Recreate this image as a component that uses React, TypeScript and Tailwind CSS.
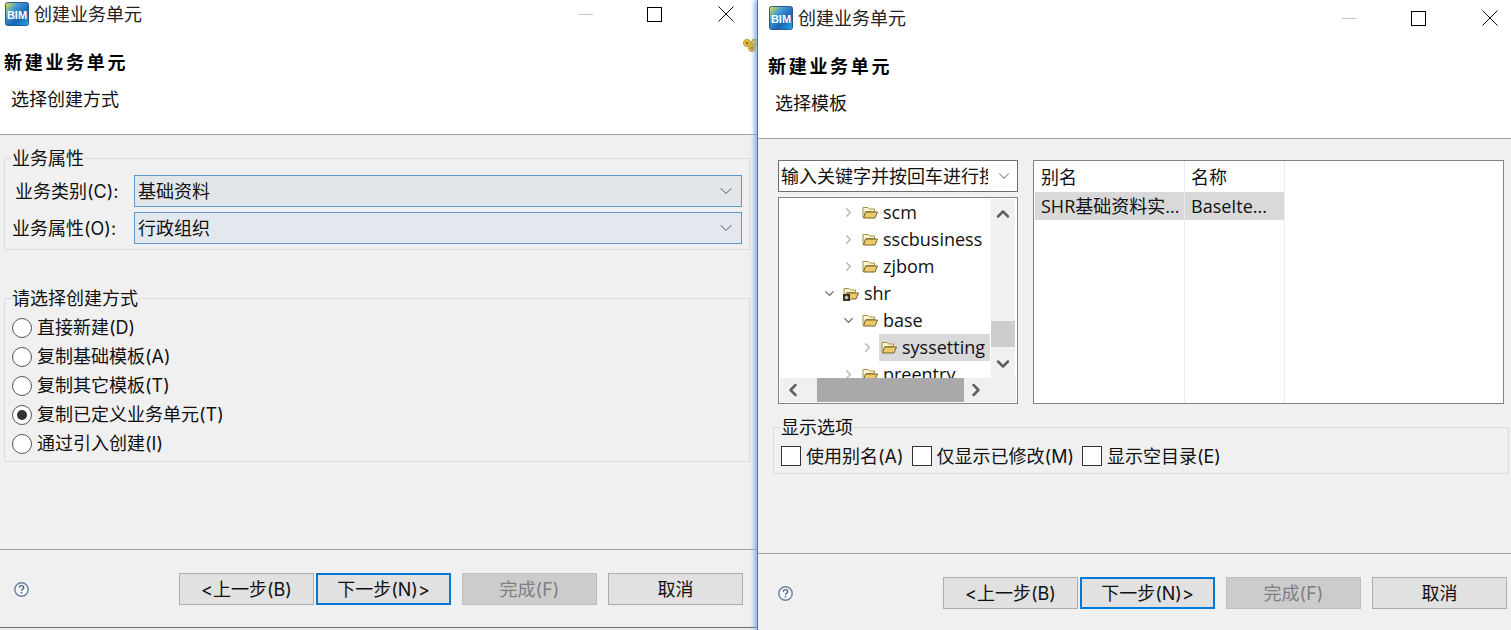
import type { ReactNode } from 'react';
import { ChevronDown, ChevronRight, ChevronUp, ChevronLeft } from 'lucide-react';

const font = "font-['Open_Sans','Noto_Sans_CJK_SC',sans-serif]";
// labels with mnemonics run a bit wider in the original, Inter gets closer
const labelFont = "font-['Inter','Noto_Sans_CJK_SC',sans-serif]";

function BimIcon() {
  return (
    <svg width="24" height="24" viewBox="0 0 24 24" className="shrink-0">
      <defs>
        <linearGradient id="bimBg" x1="0" y1="0" x2="1" y2="1">
          <stop offset="0" stopColor="#f4e62e" />
          <stop offset="0.32" stopColor="#3f9ad8" />
          <stop offset="0.65" stopColor="#1a62b2" />
          <stop offset="1" stopColor="#12b4ea" />
        </linearGradient>
      </defs>
      <rect x="0.5" y="0.5" width="23" height="23" rx="2" fill="url(#bimBg)" stroke="#2a5a92" />
      <text x="12" y="16.5" textAnchor="middle" fontSize="11" fontWeight="700" fontFamily="Liberation Sans, sans-serif" fill="#fff">BIM</text>
    </svg>
  );
}

function WindowControls() {
  return (
    <div className="ml-auto flex items-center">
      <div className="h-px w-[15px] bg-[#c8c8c8]" />
      <div className="ml-[54px] h-[15px] w-[15px] border border-black" />
      <svg width="16" height="16" viewBox="0 0 16 16" className="ml-[56px] mr-[23px]">
        <path d="M0.5 0.5L15.5 15.5M15.5 0.5L0.5 15.5" stroke="#111" strokeWidth="1" />
      </svg>
    </div>
  );
}

function HelpIcon() {
  return (
    <svg width="15" height="15" viewBox="0 0 15 15">
      <circle cx="7.5" cy="7.5" r="6.7" fill="#f4f6fa" stroke="#6f84a6" strokeWidth="1.5" />
      <path d="M5.3 5.8c0-1.4 1-2.1 2.2-2.1s2.2.7 2.2 2c0 1.6-2.2 1.6-2.2 3.2" fill="none" stroke="#4a5f82" strokeWidth="1.3" />
      <rect x="6.8" y="10" width="1.4" height="1.4" fill="#4a5f82" />
    </svg>
  );
}

function Btn({ label, kind = 'normal' }: { label: string; kind?: 'normal' | 'primary' | 'disabled' }) {
  const cls =
    kind === 'primary'
      ? 'border-2 border-[#0078d7] bg-[#e1e1e1] text-[#111]'
      : kind === 'disabled'
      ? 'border border-[#bfbfbf] bg-[#cccccc] text-[#7f7f7f]'
      : 'border border-[#adadad] bg-[#e1e1e1] text-[#111]';
  return <div className={`flex h-[32px] w-[135px] items-center justify-center text-[18px] ${labelFont} ${cls}`}>{label}</div>;
}

function Dialog({ subtitle, section, lift, children }: { subtitle: string; section: string; lift: string; children: ReactNode }) {
  return (
    <>
      <div className={`${section} ${lift} shrink-0 bg-white`}>
        <div className="flex h-[28px] items-center pl-[5px]">
          <BimIcon />
          <span className="ml-[5px] text-[18px] leading-[28px] text-[#222]">创建业务单元</span>
          <WindowControls />
        </div>
        <div className="ml-[4px] mt-[22px] text-[18px] font-bold leading-[24px] tracking-[2.7px] text-black">新建业务单元</div>
        <div className="ml-[11px] mt-[13px] pb-[23px] text-[18px] leading-[24px] text-[#111]">{subtitle}</div>
      </div>
      <div className="h-px w-full bg-[#a0a0a0]" />
      <div className={`${section} h-[414px] shrink-0 bg-[#f0f0f0]`}>{children}</div>
      <div className="h-px w-full bg-[#a0a0a0]" />
      <div className={`${section} flex h-[77px] shrink-0 items-start bg-[#f0f0f0] pt-[23px]`}>
        <div className="ml-[14px] mt-[9px] flex">
          <HelpIcon />
        </div>
        <div className="ml-[150px] flex">
          <Btn label="<上一步(B)" />
          <div className="ml-[2px]">
            <Btn label="下一步(N)>" kind="primary" />
          </div>
          <div className="ml-[11px]">
            <Btn label="完成(F)" kind="disabled" />
          </div>
          <div className="ml-[11px]">
            <Btn label="取消" />
          </div>
        </div>
      </div>
    </>
  );
}

function Combo({ label, labelClass, value, bg }: { label: string; labelClass: string; value: string; bg: string }) {
  return (
    <div className="flex h-[32px] items-center">
      <span className={`text-[18px] text-[#111] ${labelFont} ${labelClass}`}>{label}</span>
      <div className={`ml-auto flex h-[32px] w-[608px] items-center border border-[#5f96c8] pl-[3px] pr-[5px] text-[18px] text-[#111] ${bg}`}>
        {value}
        <ChevronDown className="ml-auto text-[#555]" size={20} strokeWidth={1.2} />
      </div>
    </div>
  );
}

function Radio({ label, checked = false }: { label: string; checked?: boolean }) {
  return (
    <div className="flex h-[29px] items-center pl-[7px]">
      <div className="flex h-[20px] w-[20px] items-center justify-center rounded-full border border-[#555] bg-white">
        {checked && <div className="h-[10px] w-[10px] rounded-full bg-[#333]" />}
      </div>
      <span className={`ml-[5px] text-[18px] text-[#111] ${labelFont}`}>{label}</span>
    </div>
  );
}

function Check({ label, gap }: { label: string; gap: string }) {
  return (
    <div className={`flex h-[20px] items-center ${gap}`}>
      <div className="h-[20px] w-[20px] border border-[#333] bg-white" />
      <span className={`ml-[5px] text-[18px] text-[#111] ${labelFont}`}>{label}</span>
    </div>
  );
}

function Folder({ pkg = false }: { pkg?: boolean }) {
  return (
    <svg width="17" height="15" viewBox="0 0 17 15" className="shrink-0">
      <path d="M1 12V2.5H6L7.5 4H12.5V6.5H4L2 12Z" fill="#fff6cf" stroke="#a58e46" />
      <path d="M3.5 7H15.5L13 13H1.5Z" fill="#ecc969" stroke="#75652f" />
      {pkg && <rect x="0" y="8" width="7" height="7" fill="#3a2f1a" />}
      {pkg && <path d="M2 10l3 3M5 10l-3 3M3.5 9.5v4M1.5 11.5h4" stroke="#fff" strokeWidth="0.6" />}
    </svg>
  );
}

function TreeRow({ indent, label, open = false, pkg = false, selected = false }: { indent: string; label: string; open?: boolean; pkg?: boolean; selected?: boolean }) {
  const Arrow = open ? ChevronDown : ChevronRight;
  return (
    <div className={`flex h-[27px] shrink-0 items-center ${indent}`}>
      <Arrow size={15} strokeWidth={2} className={open ? 'text-[#666]' : 'text-[#b4b4b4]'} />
      <div className={`ml-[4px] flex h-[27px] items-center whitespace-nowrap pl-[2px] text-[18px] text-[#111] ${selected ? 'bg-[#d9d9d9] pr-[5px]' : 'pr-[2px]'}`}>
        <Folder pkg={pkg} />
        <span className="ml-[4px]">{label}</span>
      </div>
    </div>
  );
}

function TreePanel() {
  return (
    <div className="mt-[5px] flex h-[207px] w-[240px] flex-col border border-[#82828c] bg-white p-px">
      <div className="flex h-[179px] shrink-0">
        <div className="flex min-w-0 flex-1 flex-col overflow-hidden">
          <TreeRow indent="ml-[61px]" label="scm" />
          <TreeRow indent="ml-[61px]" label="sscbusiness" />
          <TreeRow indent="ml-[61px]" label="zjbom" />
          <TreeRow indent="ml-[42px]" label="shr" open pkg />
          <TreeRow indent="ml-[61px]" label="base" open />
          <TreeRow indent="ml-[80px]" label="syssetting" selected />
          <TreeRow indent="ml-[61px]" label="preentry" />
        </div>
        <div className="mr-px flex w-[24px] shrink-0 flex-col items-center bg-[#f0f0f0]">
          <ChevronUp size={20} strokeWidth={3} className="mt-[5px] text-[#606060]" />
          <div className="mt-[97px] h-[26px] w-full bg-[#cdcdcd]" />
          <ChevronDown size={20} strokeWidth={3} className="mt-[7px] text-[#606060]" />
        </div>
      </div>
      <div className="flex h-[24px] items-center bg-[#f0f0f0]">
        <ChevronLeft size={20} strokeWidth={3} className="ml-[3px] text-[#606060]" />
        <div className="ml-[14px] h-[24px] w-[147px] bg-[#a9a9a9]" />
        <ChevronRight size={20} strokeWidth={3} className="ml-[2px] text-[#606060]" />
      </div>
    </div>
  );
}

function ListPanel() {
  return (
    <div className="ml-[15px] flex h-[244px] w-[471px] border border-[#82828c] bg-white pl-px text-[18px] text-[#111]">
      <div className="flex w-[150px] flex-col border-r border-[#e3eefa]">
        <div className="flex h-[31px] items-center pl-[6px] pt-[2px]">别名</div>
        <div className="flex h-[28px] items-center bg-[#d9d9d9] pl-[6px]">SHR基础资料实...</div>
      </div>
      <div className="flex w-[100px] flex-col border-r border-[#e3eefa]">
        <div className="flex h-[31px] items-center pl-[6px] pt-[2px]">名称</div>
        <div className="flex h-[28px] items-center bg-[#d9d9d9] pl-[6px]">BaseIte...</div>
      </div>
    </div>
  );
}

export default function App() {
  return (
    <div className={`relative flex h-[630px] w-[1511px] overflow-hidden bg-[#ececec] ${font}`}>
      {/* first wizard page */}
      <div className="h-[628px] w-[757px] shrink-0 overflow-hidden border-b border-[#6e6e6e]">
        <Dialog subtitle="选择创建方式" section="w-[757px]" lift="pt-0">
          <div className="pt-[12px]">
            <fieldset className="ml-[4px] w-[746px] border border-[#dcdcdc] pb-[5px]">
              <legend className="ml-[7px] px-0 text-[18px] leading-[22px] text-[#111]">业务属性</legend>
              <div className="mt-[6px] flex flex-col gap-[5px] px-[7px]">
                <Combo label="业务类别(C):" labelClass="ml-[3px]" value="基础资料" bg="bg-[#e1e6ea]" />
                <Combo label="业务属性(O):" labelClass="" value="行政组织" bg="bg-[#e3e8ef]" />
              </div>
            </fieldset>
            <fieldset className="ml-[4px] mt-[37px] w-[746px] border border-[#dcdcdc] pb-[3px]">
              <legend className="ml-[7px] px-0 text-[18px] leading-[22px] text-[#111]">请选择创建方式</legend>
              <div className="pt-[4px]">
                <Radio label="直接新建(D)" />
                <Radio label="复制基础模板(A)" />
                <Radio label="复制其它模板(T)" />
                <Radio label="复制已定义业务单元(T)" checked />
                <Radio label="通过引入创建(I)" />
              </div>
            </fieldset>
          </div>
        </Dialog>
      </div>

      {/* desktop icon peeking out behind the second dialog */}
      <svg width="16" height="16" viewBox="0 0 16 16" className="absolute left-[743px] top-[38px]">
        <circle cx="12" cy="4.5" r="3.5" fill="#f0c93c" stroke="#a8842a" strokeWidth="0.8" />
        <circle cx="4" cy="5" r="3.6" fill="#f0c93c" stroke="#a8842a" strokeWidth="0.8" />
        <path d="M4 3v4M2 5h4" stroke="#8a6a1c" strokeWidth="1" />
        <circle cx="9" cy="10" r="3.6" fill="#f0c93c" stroke="#a8842a" strokeWidth="0.8" />
        <path d="M9 8v4M7 10h4" stroke="#8a6a1c" strokeWidth="1" />
      </svg>

      {/* second wizard page, sits on top with a blue focus glow */}
      <div className="relative h-[630px] flex-1 overflow-hidden border-l border-[#5f7390] shadow-[-3px_0_4px_rgba(120,170,235,0.8)]">
        <Dialog subtitle="选择模板" section="w-[763px] pl-[6px]" lift="pt-[4px]">
          <div className="pt-[21px]">
            <div className="ml-[14px] flex">
              <div className="w-[240px]">
                <div className="flex h-[32px] w-[240px] items-center overflow-hidden border border-[#6e6e6e] bg-white pl-[2px] pr-[4px] text-[18px] text-[#111]">
                  <span className="w-[207px] overflow-hidden whitespace-nowrap">输入关键字并按回车进行搜索</span>
                  <ChevronDown className="ml-auto shrink-0 text-[#777]" size={18} strokeWidth={1.4} />
                </div>
                <TreePanel />
              </div>
              <ListPanel />
            </div>
            <fieldset className="ml-[9px] mt-[12px] w-[736px] border border-[#dcdcdc] pb-[7px]">
              <legend className="ml-[7px] px-0 text-[18px] leading-[22px] text-[#111]">显示选项</legend>
              <div className="mt-[8px] flex pl-[7px]">
                <Check label="使用别名(A)" gap="" />
                <Check label="仅显示已修改(M)" gap="ml-[8px]" />
                <Check label="显示空目录(E)" gap="ml-[8px]" />
              </div>
            </fieldset>
          </div>
        </Dialog>
      </div>
    </div>
  );
}
